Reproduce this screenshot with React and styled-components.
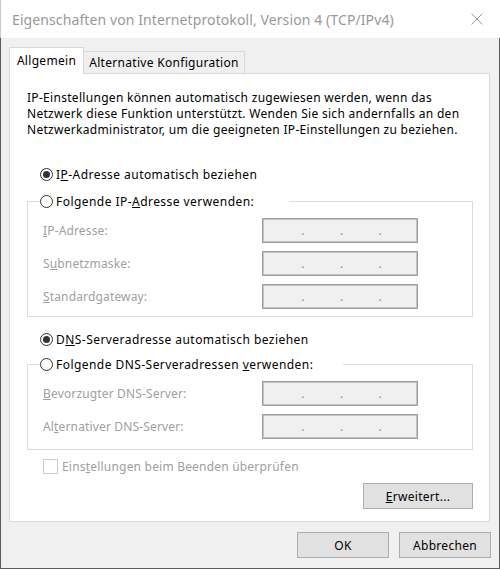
import React from "react";
import styled, { createGlobalStyle } from "styled-components";

const Global = createGlobalStyle`
  html, body { margin: 0; padding: 0; background: #ffffff; }
  body { font-family: "Noto Sans", "Liberation Sans", sans-serif; }
`;

const FONT = `"Noto Sans", "Liberation Sans", sans-serif`;

const Window = styled.div`
  width: 500px;
  height: 569px;
  box-sizing: border-box;
  display: flex;
  flex-direction: column;
  background: #f0f0f0;
  font-family: ${FONT};
  font-size: 12px;
  letter-spacing: 0.3px;
  color: #000;
`;

const TitleBar = styled.div`
  height: 38px;
  flex: none;
  display: flex;
  align-items: center;
  background: #ffffff;
  border-left: 1px solid #c8c8c8;
  box-sizing: border-box;
`;

const Title = styled.div`
  flex: 1;
  padding-left: 11px;
  font-size: 14px;
  letter-spacing: 0.1px;
  color: #999999;
  white-space: nowrap;
`;

const CloseButton = styled.div`
  width: 46px;
  height: 38px;
  display: flex;
  align-items: center;
  justify-content: center;
`;

const Body = styled.div`
  flex: 1;
  display: flex;
  flex-direction: column;
  border: 1px solid #5c5c5c;
  border-top: none;
  padding: 9px 8px 10px 8px;
`;

const TabStrip = styled.div`
  height: 26px;
  display: flex;
  align-items: flex-end;
  position: relative;
  z-index: 1;
`;

const Tab = styled.div`
  box-sizing: border-box;
  width: ${(p) => p.$w}px;
  height: ${(p) => (p.$active ? 27 : 22)}px;
  margin-bottom: ${(p) => (p.$active ? -1 : 0)}px;
  background: ${(p) => (p.$active ? "#ffffff" : "#f0f0f0")};
  border: 1px solid #d9d9d9;
  border-bottom: none;
  border-left: ${(p) => (p.$active ? "1px solid #d9d9d9" : "none")};
  display: flex;
  align-items: center;
  justify-content: center;
  padding-bottom: ${(p) => (p.$active ? 1 : 0)}px;
  white-space: nowrap;
`;

const Panel = styled.div`
  background: #ffffff;
  border: 1px solid #d9d9d9;
  margin-right: 1px;
  padding: 16px 16px 12px 17px;
  display: flex;
  flex-direction: column;
`;

const Paragraph = styled.p`
  margin: 0;
  line-height: 16px;
  white-space: nowrap;
`;

const RadioRow = styled.div`
  height: 20px;
  display: flex;
  align-items: center;
  gap: 3px;
  padding-left: ${(p) => p.$pl ?? 13}px;
  margin-top: ${(p) => p.$mt ?? 0}px;
  white-space: nowrap;
  letter-spacing: 0.45px;
`;

const RadioCircle = styled.span`
  width: 13px;
  height: 13px;
  box-sizing: border-box;
  border: 1px solid #333333;
  border-radius: 50%;
  display: flex;
  align-items: center;
  justify-content: center;
  flex: none;
  &::after {
    content: "";
    display: ${(p) => (p.$checked ? "block" : "none")};
    width: 7px;
    height: 7px;
    border-radius: 50%;
    background: #333333;
  }
`;

const Group = styled.fieldset`
  margin: ${(p) => p.$mt}px 0 0 0;
  border: 1px solid #dcdcdc;
  padding: 7px 12px ${(p) => p.$pb}px 12px;
  min-width: 0;
`;

const Legend = styled.legend`
  padding: 0 ${(p) => p.$pr}px 0 0;
  margin: 0;
  height: 20px;
`;

const FieldGrid = styled.div`
  margin-left: 3px;
  display: grid;
  grid-template-columns: 219px 156px;
  row-gap: 8px;
  align-items: center;
`;

const FieldLabel = styled.div`
  color: #a0a0a0;
  letter-spacing: 0.15px;
  white-space: nowrap;
`;

const IpBox = styled.div`
  box-sizing: border-box;
  height: 25px;
  border: 1px solid #9c9c9c;
  box-shadow: inset 0 0 0 1px #c4c4c4;
  background: #f0f0f0;
  display: grid;
  grid-template-columns: 1fr auto 1fr auto 1fr auto 1fr;
  align-items: center;
  padding: 0 0 0 3px;
  color: #8a8a9a;
  line-height: 16px;
  letter-spacing: 0;
`;

const CheckRow = styled.div`
  margin-top: 9px;
  margin-left: 16px;
  height: 15px;
  display: flex;
  align-items: center;
  gap: 4px;
  color: #a0a0a0;
  letter-spacing: 0.2px;
  white-space: nowrap;
`;

const CheckBox = styled.span`
  width: 15px;
  height: 15px;
  box-sizing: border-box;
  border: 1px solid #cccccc;
  background: #ffffff;
  flex: none;
`;

const PanelActions = styled.div`
  margin-top: 9px;
  display: flex;
  justify-content: flex-end;
`;

const Button = styled.div`
  box-sizing: border-box;
  width: ${(p) => p.$w}px;
  height: 26px;
  background: #e1e1e1;
  border: 1px solid #adadad;
  display: flex;
  align-items: center;
  justify-content: center;
  white-space: nowrap;
  color: #000;
`;

const ButtonRow = styled.div`
  margin-top: 10px;
  display: flex;
  justify-content: flex-end;
  gap: 10px;
`;

const IpField = () => (
  <IpBox>
    <span />
    <span>.</span>
    <span />
    <span>.</span>
    <span />
    <span>.</span>
    <span />
  </IpBox>
);

export default function App() {
  return (
    <>
      <Global />
      <Window>
        <TitleBar>
          <Title>Eigenschaften von Internetprotokoll, Version 4 (TCP/IPv4)</Title>
          <CloseButton>
            <svg width="12" height="12" viewBox="0 0 12 12">
              <path d="M0.5 0.5 L11.5 11.5 M11.5 0.5 L0.5 11.5" stroke="#999999" strokeWidth="1" fill="none" />
            </svg>
          </CloseButton>
        </TitleBar>
        <Body>
          <TabStrip>
            <Tab $active $w={75}>Allgemein</Tab>
            <Tab $w={161}>Alternative Konfiguration</Tab>
          </TabStrip>
          <Panel>
            <Paragraph>
              IP-Einstellungen können automatisch zugewiesen werden, wenn das
              <br />
              Netzwerk diese Funktion unterstützt. Wenden Sie sich andernfalls an den
              <br />
              Netzwerkadministrator, um die geeigneten IP-Einstellungen zu beziehen.
            </Paragraph>

            <RadioRow $mt={26}>
              <RadioCircle $checked />
              <span>I<u>P</u>-Adresse automatisch beziehen</span>
            </RadioRow>

            <Group $mt={7} $pb={7}>
              <Legend $pr={35}>
                <RadioRow $pl={0}>
                  <RadioCircle />
                  <span>Folgende IP-<u>A</u>dresse verwenden:</span>
                </RadioRow>
              </Legend>
              <FieldGrid>
                <FieldLabel><u>I</u>P-Adresse:</FieldLabel>
                <IpField />
                <FieldLabel>S<u>u</u>bnetzmaske:</FieldLabel>
                <IpField />
                <FieldLabel><u>S</u>tandardgateway:</FieldLabel>
                <IpField />
              </FieldGrid>
            </Group>

            <RadioRow $mt={12}>
              <RadioCircle $checked />
              <span>D<u>N</u>S-Serveradresse automatisch beziehen</span>
            </RadioRow>

            <Group $mt={5} $pb={10}>
              <Legend $pr={30}>
                <RadioRow $pl={0}>
                  <RadioCircle />
                  <span>Folgende DNS-Serveradressen <u>v</u>erwenden:</span>
                </RadioRow>
              </Legend>
              <FieldGrid>
                <FieldLabel><u>B</u>evorzugter DNS-Server:</FieldLabel>
                <IpField />
                <FieldLabel>Al<u>t</u>ernativer DNS-Server:</FieldLabel>
                <IpField />
              </FieldGrid>
            </Group>

            <CheckRow>
              <CheckBox />
              <span>Eins<u>t</u>ellungen beim Beenden überprüfen</span>
            </CheckRow>

            <PanelActions>
              <Button $w={110}><span><u>E</u>rweitert...</span></Button>
            </PanelActions>
          </Panel>
          <ButtonRow>
            <Button $w={92}>OK</Button>
            <Button $w={92}>Abbrechen</Button>
          </ButtonRow>
        </Body>
      </Window>
    </>
  );
}
